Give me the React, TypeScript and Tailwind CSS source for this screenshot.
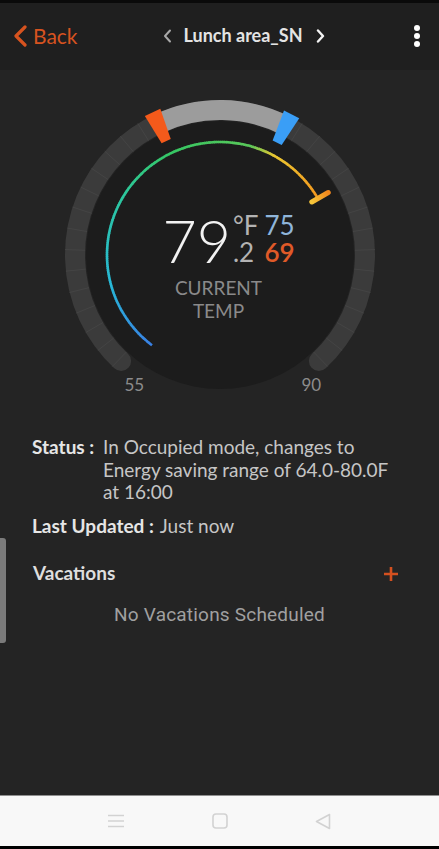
import { ReactNode } from "react";

const CX = 160;
const CY = 160;

function polar(r: number, deg: number): [number, number] {
  const a = (deg * Math.PI) / 180;
  return [CX + r * Math.sin(a), CY - r * Math.cos(a)];
}

function arcPath(r: number, a0: number, a1: number) {
  const [x0, y0] = polar(r, a0);
  const [x1, y1] = polar(r, a1);
  const large = a1 - a0 > 180 ? 1 : 0;
  return `M${x0.toFixed(2)} ${y0.toFixed(2)} A${r} ${r} 0 ${large} 1 ${x1.toFixed(2)} ${y1.toFixed(2)}`;
}

// colour stops along the current-temp arc (angle from top, clockwise)
const STOPS: [number, [number, number, number]][] = [
  [-143, [58, 130, 230]],
  [-105, [40, 185, 215]],
  [-60, [45, 200, 160]],
  [-25, [55, 200, 100]],
  [15, [90, 200, 90]],
  [28, [235, 200, 50]],
  [60, [245, 150, 30]],
];

function colorAt(deg: number) {
  for (let i = 0; i < STOPS.length - 1; i++) {
    const [a0, c0] = STOPS[i];
    const [a1, c1] = STOPS[i + 1];
    if (deg >= a0 && deg <= a1) {
      const t = (deg - a0) / (a1 - a0);
      const c = c0.map((v, k) => Math.round(v + (c1[k] - v) * t));
      return `rgb(${c[0]},${c[1]},${c[2]})`;
    }
  }
  const last = STOPS[STOPS.length - 1][1];
  return `rgb(${last[0]},${last[1]},${last[2]})`;
}

function marker(deg: number, fill: string) {
  const pts = [
    polar(158, deg - 3.1),
    polar(158, deg + 3.1),
    polar(126, deg + 2.3),
    polar(126, deg - 2.3),
  ];
  return <polygon points={pts.map((p) => p.join(",")).join(" ")} fill={fill} />;
}

function Gauge() {
  const segs: ReactNode[] = [];
  for (let d = -143; d < 60; d += 1) {
    segs.push(
      <path key={d} d={arcPath(113, d, d + 1.3)} stroke={colorAt(d)} strokeWidth={2.6} fill="none" />
    );
  }
  const ticks: ReactNode[] = [];
  for (let d = -136; d <= 136; d += 8) {
    const [x0, y0] = polar(135, d);
    const [x1, y1] = polar(155, d);
    ticks.push(<line key={d} x1={x0} y1={y0} x2={x1} y2={y1} stroke="#444" strokeWidth={1} />);
  }
  const [px0, py0] = polar(106, 60);
  const [px1, py1] = polar(125, 60);

  return (
    <div className="relative mx-auto mt-[25px] h-[310px] w-[320px]">
      <svg width="320" height="310" viewBox="0 0 320 310" className="absolute left-0 top-0">
        <defs>
          <linearGradient id="ptr" x1={px0} y1={py0} x2={px1} y2={py1} gradientUnits="userSpaceOnUse">
            <stop offset="0" stopColor="#f6c63a" />
            <stop offset="1" stopColor="#f2881c" />
          </linearGradient>
        </defs>
        <circle cx={CX} cy={CY} r={134} fill="#1c1c1c" />
        <path d={arcPath(145, -137, 137)} stroke="#3b3b3b" strokeWidth={20} strokeLinecap="round" fill="none" />
        {ticks}
        <path d={arcPath(145, -25, 27)} stroke="#9c9c9c" strokeWidth={20} fill="none" />
        {marker(-25.3, "#f45a1b")}
        {marker(27, "#3a9ef6")}
        {segs}
        <line x1={px0} y1={py0} x2={px1} y2={py1} stroke="url(#ptr)" strokeWidth={5} strokeLinecap="round" />
      </svg>

      {/* readout */}
      <div className="absolute left-[103px] top-[116px] flex items-start">
        <span className="text-[59px] font-light leading-none text-[#f2f2f2]">79</span>
        <div className="ml-[2px] mt-[1px] flex flex-col text-[26px] leading-[27px] text-[#b3b3b3]">
          <span>°F</span>
          <span>.2</span>
        </div>
        <div className="ml-[6px] mt-[1px] flex flex-col text-[26px] leading-[27px]">
          <span className="text-[#8fb5da]">75</span>
          <span className="font-semibold text-[#e05a28]">69</span>
        </div>
      </div>
      <div className="absolute left-0 right-0 top-[181px] flex flex-col items-center text-[19px] leading-[23px] text-[#8a8a8a]">
        <span className="-ml-[2px]">CURRENT</span>
        <span className="-ml-[2px]">TEMP</span>
      </div>

      <span className="absolute left-[65px] top-[277px] text-[17px] text-[#8c8c8c]">55</span>
      <span className="absolute left-[242px] top-[277px] text-[17px] text-[#8c8c8c]">90</span>
    </div>
  );
}

export default function App() {
  return (
    <div
      className="flex h-[849px] w-[439px] flex-col overflow-hidden bg-black"
      style={{ fontFamily: "Lato, 'Open Sans', sans-serif" }}
    >
      <div className="h-[3px] bg-[#0a0a0a]" />

      {/* header */}
      <header className="flex h-[67px] items-center bg-[#1f1f1f] pb-[2px]">
        <div className="ml-[13px] flex items-center text-[#d7531f]">
          <svg width="15" height="22" viewBox="0 0 15 22">
            <path d="M12 2 L3 11 L12 20" stroke="#d7531f" strokeWidth="3.2" fill="none" strokeLinecap="round" strokeLinejoin="round" />
          </svg>
          <span className="ml-[5px] text-[21px]">Back</span>
        </div>
        <div className="ml-[85px] flex items-center">
          <svg width="9" height="14" viewBox="0 0 9 14">
            <path d="M7 1.5 L2 7 L7 12.5" stroke="#a8a8a8" strokeWidth="2" fill="none" strokeLinecap="round" strokeLinejoin="round" />
          </svg>
          <span className="ml-[12px] text-[18px] font-bold text-[#e4e4e4]">Lunch area_SN</span>
          <svg width="9" height="14" viewBox="0 0 9 14" className="ml-[13px]">
            <path d="M2 1.5 L7 7 L2 12.5" stroke="#f2f2f2" strokeWidth="2.4" fill="none" strokeLinecap="round" strokeLinejoin="round" />
          </svg>
        </div>
        <div className="ml-auto mr-[19px] flex flex-col gap-[2px]">
          <span className="h-[6px] w-[6px] rounded-full bg-white" />
          <span className="h-[6px] w-[6px] rounded-full bg-white" />
          <span className="h-[6px] w-[6px] rounded-full bg-white" />
        </div>
      </header>

      {/* content */}
      <main className="relative flex h-[725px] flex-col bg-[#242424]">
        <Gauge />

        <div className="mt-[31px] flex pl-[32px] pr-[40px] text-[19px] leading-[22.5px]">
          <span className="w-[71px] shrink-0 font-bold text-[#e6e6e6]">Status :</span>
          <span className="text-[#c6c6c6]">In Occupied mode, changes to Energy saving range of 64.0-80.0F at 16:00</span>
        </div>
        <div className="mt-[11px] flex pl-[32px] text-[19px] leading-[22.5px]">
          <span className="font-bold text-[#e6e6e6]">Last Updated :</span>
          <span className="ml-[6px] text-[#c6c6c6]">Just now</span>
        </div>

        <div className="mt-[25px] flex h-[23px] items-center pl-[33px] pr-[40px]">
          <span className="text-[19px] font-bold text-[#dedede]">Vacations</span>
          <svg width="16" height="16" viewBox="0 0 16 16" className="ml-auto">
            <path d="M8 1 V15 M1 8 H15" stroke="#d4501f" strokeWidth="2.6" />
          </svg>
        </div>
        <div
          className="mt-[18px] text-center text-[19px] leading-[23px] tracking-[0.2px] text-[#a0a0a0]"
          style={{ fontFamily: "Roboto, sans-serif" }}
        >
          No Vacations Scheduled
        </div>

        {/* scroll indicator */}
        <div className="absolute left-0 top-[468px] h-[105px] w-[6px] rounded-r-[3px] bg-[#7b7b7b]" />
      </main>

      <div className="h-px bg-[#8f8f8f]" />

      {/* android nav */}
      <nav className="flex h-[50px] items-center bg-[#f8f8f8]">
        <svg width="16" height="14" viewBox="0 0 16 14" className="ml-[108px]">
          <path d="M0 1.5 H16 M0 7 H16 M0 12.5 H16" stroke="#d2d2d2" strokeWidth="1.6" />
        </svg>
        <svg width="16" height="16" viewBox="0 0 16 16" className="ml-[88px]">
          <rect x="1" y="1" width="14" height="14" rx="3" stroke="#d2d2d2" strokeWidth="1.6" fill="none" />
        </svg>
        <svg width="16" height="17" viewBox="0 0 16 17" className="ml-[87px]">
          <path d="M14.5 1.5 V15.5 L1.5 8.5 Z" stroke="#d2d2d2" strokeWidth="1.6" fill="none" strokeLinejoin="round" />
        </svg>
      </nav>
      <div className="h-[3px] bg-black" />
    </div>
  );
}
